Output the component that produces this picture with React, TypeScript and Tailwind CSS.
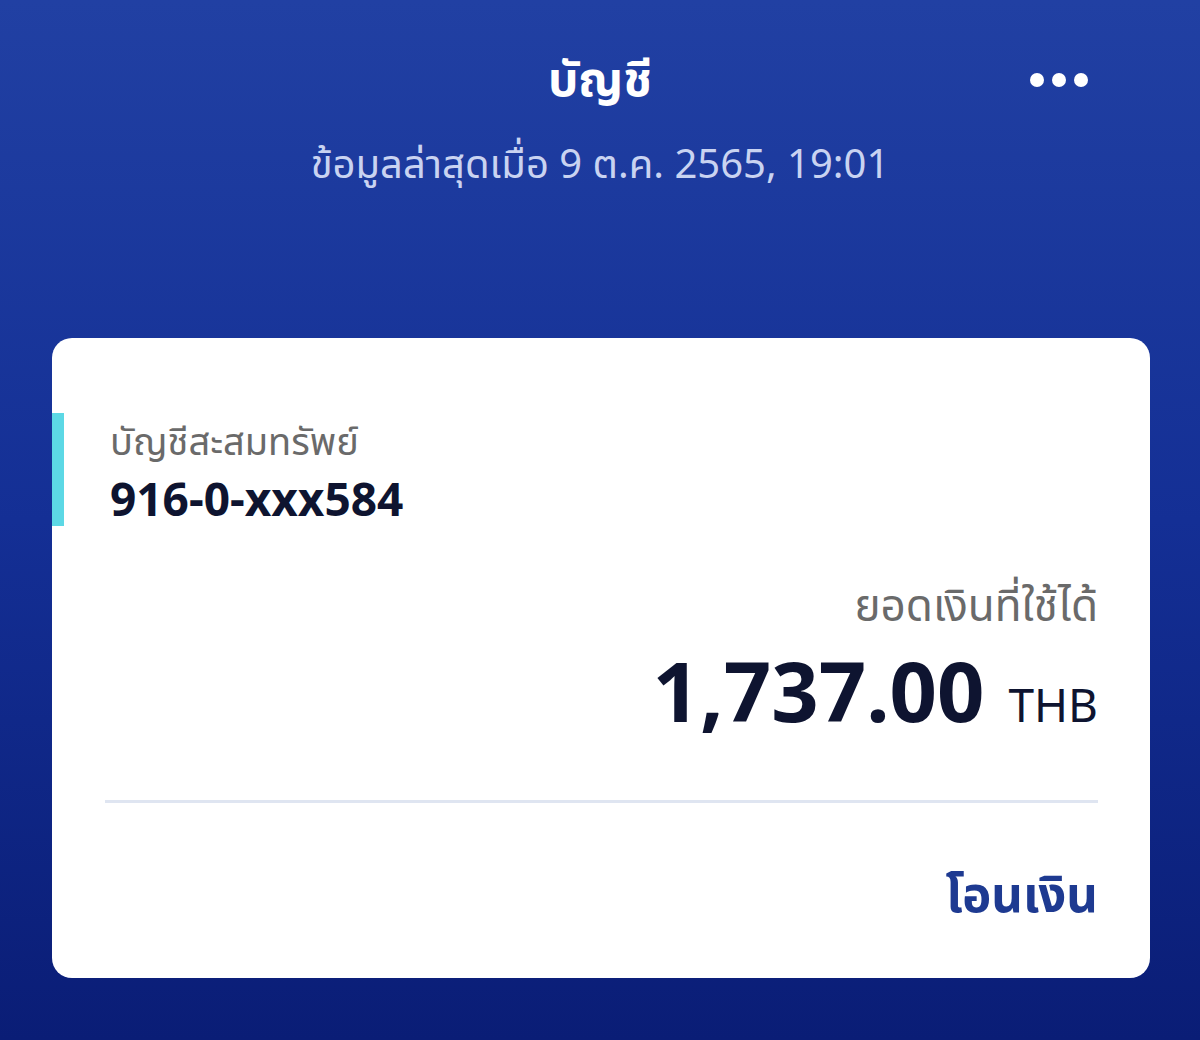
import React from "react";

const font = { fontFamily: '"Noto Sans", "Noto Sans Thai", "Liberation Sans", sans-serif' };

export default function App() {
  return (
    <div
      className="relative w-[1200px] h-[1040px] overflow-hidden bg-gradient-to-b from-[#2140a3] via-[#142f95] to-[#0a1d76]"
      style={font}
    >
      <div className="grid grid-cols-[1fr_auto_1fr] items-center pt-[48px]">
        <div />
        <div className="text-white font-bold text-[48px] leading-[60px] text-center">บัญชี</div>
        <div className="flex justify-end pr-[112px] gap-[8px] pt-[4px]">
          <span className="w-[14px] h-[14px] rounded-full bg-white" />
          <span className="w-[14px] h-[14px] rounded-full bg-white" />
          <span className="w-[14px] h-[14px] rounded-full bg-white" />
        </div>
      </div>
      <div className="text-center text-[#c9d3f1] text-[40px] leading-[50px] mt-[30px]">
        ข้อมูลล่าสุดเมื่อ 9 ต.ค. 2565, 19:01
      </div>

      <div className="ml-[52px] w-[1098px] mt-[150px] h-[640px] bg-white rounded-[20px] flex flex-col">
        <div className="flex mt-[75px] items-start">
          <div className="w-[12px] h-[113px] bg-[#5cd8e5]" />
          <div className="pl-[46px] flex flex-col">
            <div className="text-[#6a6a6a] text-[38px] leading-[50px] mt-[2px]">บัญชีสะสมทรัพย์</div>
            <div className="text-[#0e1430] font-bold text-[46px] leading-[56px] mt-[5px]">916-0-xxx584</div>
          </div>
        </div>
        <div className="pl-[53px] pr-[52px] flex flex-col items-end mt-[50px]">
          <div className="text-[#6a6a6a] text-[44px] leading-[56px]">ยอดเงินที่ใช้ได้</div>
          <div className="flex items-baseline gap-[24px] mt-[8px] h-[100px]">
            <span className="text-[#0e1430] font-bold text-[83px] leading-[100px]">1,737.00</span>
            <span className="text-[#0e1430] text-[46px] leading-[60px]">THB</span>
          </div>
        </div>
        <div className="ml-[53px] mr-[52px] mt-[60px] h-[3px] bg-[#dfe5f1]" />
        <div className="pl-[53px] pr-[52px] flex justify-end mt-[60px]">
          <span className="text-[#1e3a91] font-bold text-[49px] leading-[60px]">โอนเงิน</span>
        </div>
      </div>
    </div>
  );
}
